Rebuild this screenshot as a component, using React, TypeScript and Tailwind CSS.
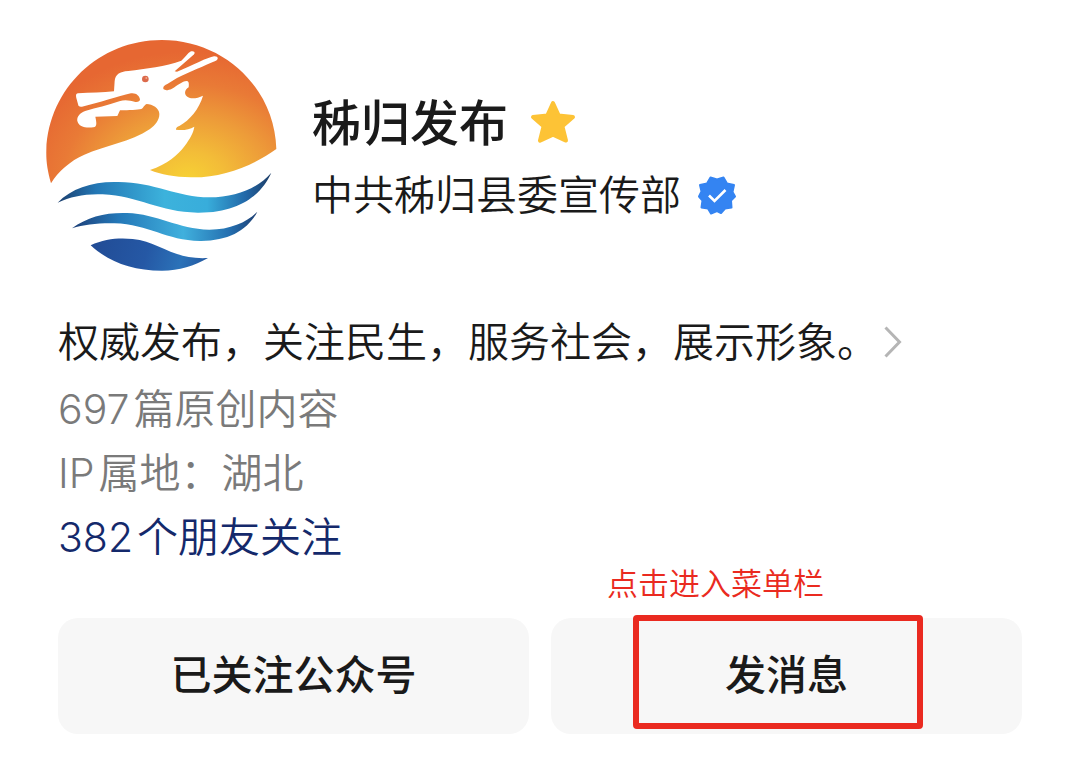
import React from "react";

function Logo() {
  return (
    <svg viewBox="30 30 693 693" className="size-[231px] shrink-0" role="img" aria-label="秭归发布">
      <defs>
        <radialGradient
          id="sun"
          gradientUnits="userSpaceOnUse"
          cx="0"
          cy="0"
          r="1"
          gradientTransform="translate(455 450) scale(500 385)"
        >
          <stop offset="0" stopColor="#f7d234" />
          <stop offset="0.22" stopColor="#f3bd38" />
          <stop offset="0.5" stopColor="#ed9b39" />
          <stop offset="0.75" stopColor="#e97a36" />
          <stop offset="1" stopColor="#e66732" />
        </radialGradient>
        <linearGradient id="wave1" gradientUnits="userSpaceOnUse" x1="65" y1="0" x2="706" y2="0">
          <stop offset="0" stopColor="#1c3f6e" />
          <stop offset="0.18" stopColor="#2377b5" />
          <stop offset="0.5" stopColor="#3cb2dc" />
          <stop offset="0.7" stopColor="#38addb" />
          <stop offset="0.88" stopColor="#2268a8" />
          <stop offset="1" stopColor="#1d3c66" />
        </linearGradient>
        <linearGradient id="wave2" gradientUnits="userSpaceOnUse" x1="108" y1="0" x2="664" y2="0">
          <stop offset="0" stopColor="#1d3f78" />
          <stop offset="0.25" stopColor="#2478b8" />
          <stop offset="0.6" stopColor="#40b0dd" />
          <stop offset="0.85" stopColor="#246fb0" />
          <stop offset="1" stopColor="#1e3f72" />
        </linearGradient>
        <linearGradient id="wave3" gradientUnits="userSpaceOnUse" x1="164" y1="620" x2="500" y2="720">
          <stop offset="0" stopColor="#214b94" />
          <stop offset="0.5" stopColor="#2558a5" />
          <stop offset="0.8" stopColor="#2b72b8" />
          <stop offset="1" stopColor="#245ba3" />
        </linearGradient>
      </defs>
      <path
        fill="url(#sun)"
        d="M45 460 C34 420 30 395 31 360 C38 175 190 30 377 30 C565 30 716 175 721 357 C655 405 560 444 465 442 C415 441 375 434 342 420 C395 402 425 376 446 348 C462 326 472 309 475 290 C460 299 440 302 420 299 C419 294 424 290 430 288 C462 270 489 237 501 197 C486 204 466 209 455 201 C441 191 448 178 458 172 C459 160 459 154 452 153 C438 154 426 166 408 176 C397 181 388 182 383 178 C379 171 385 166 394 162 L423 144 C460 127 505 107 538 93 C549 87 547 78 534 79 C515 82 470 106 423 125 L416 124 L471 76 C479 70 477 61 465 64 C454 70 448 82 436 92 C390 110 328 116 277 123 C250 125 238 134 236 153 L234 184 C202 188 162 188 126 190 C120 190 119 196 121 204 L127 226 C128 230 132 231 138 230 C190 218 246 199 285 190 C301 188 310 198 312 208 C312 214 306 217 298 216 C280 211 267 208 250 214 C215 226 180 234 150 242 C130 248 122 262 124 273 C128 290 148 295 172 292 C182 290 183 282 178 260 L244 258 L252 241 C280 241 305 239 316 237 C323 234 323 226 332 222 C349 222 370 235 370 251 C371 270 358 286 342 297 C285 335 205 348 145 374 C103 392 66 425 45 460 Z"
      />
      <circle cx="328" cy="147" r="10" fill="#dc6a4b" />
      <circle cx="331" cy="144" r="3" fill="#f0a98a" />
      <path
        fill="url(#wave1)"
        d="M65 518 C105 477 165 456 234 456 C350 452 420 502 520 502 C600 502 665 475 706 428 C680 486 620 549 485 548 C370 547 310 498 200 493 C145 491 105 500 65 518 Z"
      />
      <path
        fill="url(#wave2)"
        d="M108 595 C155 560 210 547 273 549 C365 552 425 597 520 599 C585 599 635 575 664 545 C635 602 575 634 492 633 C390 632 340 583 235 580 C185 579 145 584 108 595 Z"
      />
      <path
        fill="url(#wave3)"
        d="M164 646 C205 626 250 623 290 627 C370 635 410 690 516 684 C475 708 430 722 378 722 C285 722 215 693 164 646 Z"
      />
    </svg>
  );
}

function Star() {
  return (
    <svg viewBox="0 0 46 48" className="h-12 w-[46px] shrink-0" role="img" aria-label="星标">
      <path
        d="M23 3 L28.6 15.4 L43 17 L32.4 26.2 L36 40.6 L23 34.6 L10 40.6 L13.6 26.2 L3 17 L17.4 15.4 Z"
        fill="#fdc336"
        stroke="#fdc336"
        strokeWidth="4"
        strokeLinejoin="round"
      />
    </svg>
  );
}

function Verified() {
  return (
    <svg viewBox="0 0 40 40" className="size-10 shrink-0" role="img" aria-label="已认证">
      <path
        d="M13.5 2.5 L20 4.5 L26.5 2.5 L30 8.5 L37 10 L35.5 17 L38 21.5 L34 25.5 L34.5 32.5 L28 33.5 L24 38 L20 36 L14 38.5 L11 33.5 L4.5 32.5 L5.5 25.5 L2 21.5 L4.5 16.5 L3 10 L10 8.5 Z"
        fill="#3484f2"
        stroke="#3484f2"
        strokeWidth="2"
        strokeLinejoin="round"
      />
      <path d="M12 20.5 L17.5 26 L28.5 15" fill="none" stroke="#fff" strokeWidth="2.6" />
    </svg>
  );
}

const actionClass =
  "h-[116px] w-full cursor-pointer rounded-[20px] bg-[#f7f7f7] pb-0 text-[41px] font-medium text-[#1a1a1a]";

export default function App() {
  return (
    <main className="bg-white pt-10 pb-11 font-['Inter','Noto_Sans_CJK_SC',sans-serif] text-[41px] font-[350] text-[#1a1a1a]">
      <header className="flex items-start gap-[35px] pl-[46px]">
        <Logo />
        <div className="pt-12">
          <h1 className="flex items-center gap-[22px] text-[49px] leading-[72px] font-medium">
            秭归发布
            <Star />
          </h1>
          <p className="flex items-center gap-4 leading-[70px]">
            中共秭归县委宣传部
            <Verified />
          </p>
        </div>
      </header>

      <section className="px-[58px] pt-9">
        <a href="#about" className="flex items-center gap-[6px] leading-[70px]">
          权威发布，关注民生，服务社会，展示形象。
          <svg viewBox="0 0 18 32" className="h-8 w-[18px]" fill="none" stroke="#b5b5b5" strokeWidth="3" aria-hidden="true">
            <path d="M1.5 1.5 L15.5 16 L1.5 30.5" />
          </svg>
        </a>
        <p className="flex gap-1 leading-16 text-[#7a7a7a]">
          <span>697</span>
          <span>篇原创内容</span>
        </p>
        <p className="flex gap-1 leading-16 text-[#7a7a7a]">
          <span>IP</span>
          <span>属地：湖北</span>
        </p>
        <a href="#friends" className="flex gap-1 leading-16 text-[#14296b]">
          <span>382</span>
          <span>个朋友关注</span>
        </a>

        <div className="mt-[49px] grid grid-cols-2 gap-[22px]">
          <button type="button" className={actionClass}>
            已关注公众号
          </button>
          <div className="relative">
            <button type="button" className={actionClass}>
              发消息
            </button>
            <div className="pointer-events-none absolute -top-[3px] left-[82px] h-[114px] w-[290px] rounded-[4px] border-6 border-[#ea2a20]" />
            <p className="pointer-events-none absolute bottom-full left-14 mb-[11px] text-[31px] leading-[46px] whitespace-nowrap text-[#ea2a20]">
              点击进入菜单栏
            </p>
          </div>
        </div>
      </section>
    </main>
  );
}
